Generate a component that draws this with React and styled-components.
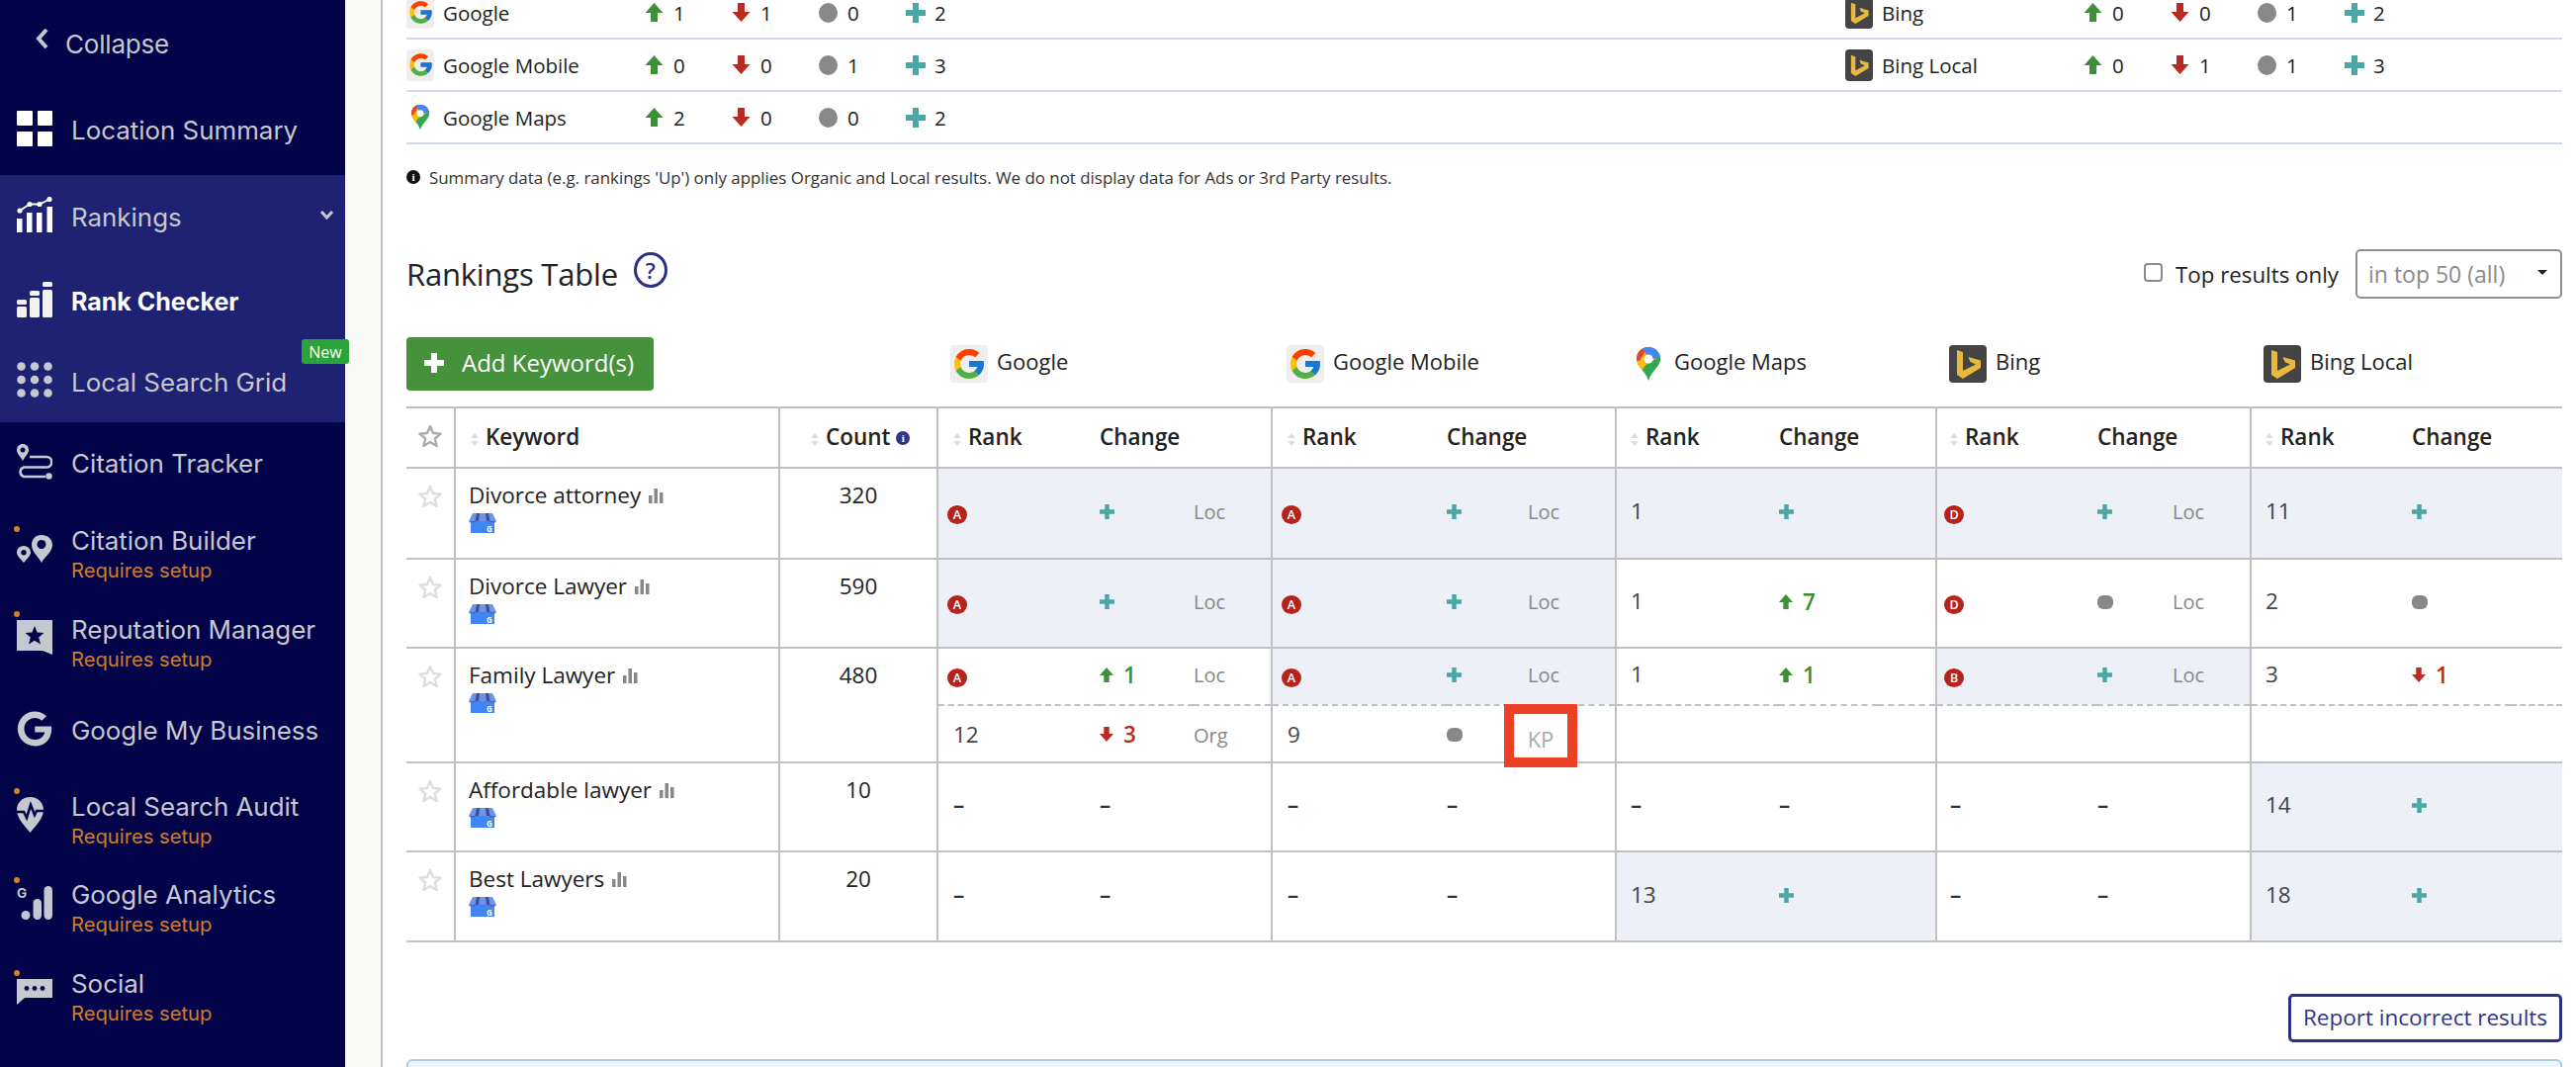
import React, { useId } from 'react';
import styled, { createGlobalStyle } from 'styled-components';
import { FcGoogle } from 'react-icons/fc';
import { FaGoogle } from 'react-icons/fa';

const Global = createGlobalStyle`
  html, body { margin: 0; padding: 0; background: #fff; overflow: hidden; }
  * { box-sizing: border-box; }
  body { font-family: "Open Sans", "Liberation Sans", sans-serif; color: #222; }
`;

const Page = styled.div`
  display: flex; width: 2605px; height: 1079px; overflow: hidden; background: #fff;
`;

/* ---------- sidebar ---------- */
const Side = styled.nav`
  width: 349px; flex: none; height: 1079px; background: #03034a; position: relative;
  font-family: Inter, "Open Sans", sans-serif; color: #c6c8d0;
`;
const CollapseRow = styled.div`
  height: 88px; display: flex; align-items: center; padding-left: 36px; gap: 16px;
  font-size: 26px; letter-spacing: -0.2px;
  svg { margin-top: -10px; }
`;
const Group = styled.div` background: #1e2272; `;
const Item = styled.div`
  height: ${p => p.$h}px; display: flex; align-items: center; padding: 0 0 ${p => p.$pb || 2}px 17px;
  position: relative; font-size: ${p => (p.$active ? 25 : 25.9)}px; letter-spacing: 0;
  color: ${p => (p.$active ? '#fff' : '#c6c8d0')};
  font-weight: ${p => (p.$active ? 700 : 400)};
`;
const IconSlot = styled.span`
  width: 36px; flex: none; margin-right: 19px; position: relative; display: flex; justify-content: flex-start;
  margin-bottom: ${p => (p.$two ? 14 : 4)}px; color: ${p => (p.$active ? '#f2f2f2' : '#c6c8d0')};
  svg { display: block; }
`;
const Dot = styled.i`
  position: absolute; left: -3px; top: -9px; width: 6px; height: 6px; border-radius: 50%; background: #d97f2b;
`;
const Labels = styled.div` display: flex; flex-direction: column; gap: 4px; line-height: 26px; `;
const Setup = styled.span` font-size: 20.2px; color: #d07c2c; `;
const NewBadge = styled.span`
  position: absolute; left: 305px; top: -6px; width: 48px; height: 25px; background: #2aa33a; color: #fff;
  font-family: "Open Sans", sans-serif; font-size: 16px; font-weight: 400; letter-spacing: 0;
  display: flex; align-items: center; justify-content: center; border-radius: 3px; z-index: 3;
`;
const ChevronWrap = styled.span`
  position: absolute; left: 323px; top: 35px; line-height: 0;
`;

const Gutter = styled.div`
  width: 38px; flex: none; background: #f9f9f7; border-right: 2px solid #c0c0c0;
`;

/* ---------- content ---------- */
const Main = styled.main`
  flex: 1; min-width: 0; padding: 0 14px 0 24px; margin-top: -13px;
`;
const SumRow = styled.div`
  display: grid; grid-template-columns: 1455px 1fr; height: 53px; border-bottom: 2px solid #cfd9ea;
`;
const SumSide = styled.div`
  display: grid; align-items: center; height: 51px;
  grid-template-columns: 241px repeat(4, 88px);
  font-size: 20px; color: #222;
`;
const SumEngine = styled.div`
  display: flex; align-items: center; gap: 9px; font-size: 20.5px;
`;
const Stat = styled.div`
  display: flex; align-items: center; font-size: 20.5px;
`;
const StatIcon = styled.span` width: 29px; flex: none; line-height: 0; `;
const Tile = styled.span`
  display: flex; align-items: center; justify-content: center; flex: none;
  width: ${p => p.$w}px; height: ${p => p.$h}px; border-radius: 4px;
  background: ${p => (p.$dark ? '#444' : p.$bare ? 'none' : '#eee')};
`;
const Note = styled.p`
  margin: 20px 0 0; height: 26px; display: flex; align-items: center; gap: 9px;
  font-size: 16.9px; color: #333;
`;
const InfoDot = styled.span`
  width: 14px; height: 14px; border-radius: 50%; flex: none; display: inline-flex;
  align-items: center; justify-content: center; background: ${p => p.$c || '#111'}; color: #fff;
  font-size: 11px; font-weight: 800; font-family: "Liberation Serif", serif;
  vertical-align: ${p => p.$lift || 0}px;
`;
const HeadRow = styled.div`
  margin-top: 60px; display: flex; align-items: center; justify-content: space-between; height: 50px;
`;
const TitleGroup = styled.div` display: flex; align-items: center; gap: 16px; `;
const Title = styled.h2`
  margin: 0; font-size: 31px; font-weight: 400; color: #222; letter-spacing: -0.2px;
`;
const Help = styled.span`
  width: 34px; height: 36px; border-radius: 50%; border: 3px solid #2b3183; color: #2b3183;
  display: flex; align-items: center; justify-content: center; font-size: 22px; font-weight: 600; margin-top: -8px;
`;
const Filters = styled.div` display: flex; align-items: center; `;
const Check = styled.input`
  appearance: none; width: 19px; height: 19px; border: 2px solid #8a8a8a; border-radius: 4px; margin: -3px 13px 0 0; background: #fff;
`;
const CheckLabel = styled.label` font-size: 22.3px; color: #222; margin-right: 17px; `;
const Select = styled.div`
  width: 209px; height: 50px; border: 2px solid #8f8f8f; border-radius: 5px; display: flex; align-items: center;
  padding: 0 13px 0 11px; justify-content: space-between; color: #8a8a8a; font-size: 23px;
  &::after { content: ''; border: 5px solid transparent; border-top-color: #222; border-bottom: 0; margin-bottom: 4px; }
`;
const EngineRow = styled.div`
  margin-top: 39px; display: grid; height: 54px; align-items: center;
  grid-template-columns: 537px 338px 348px 324px 318px 315px;
`;
const AddButton = styled.button`
  width: 250px; height: 54px; border: 0; border-radius: 4px; background: #45913c; color: #fff; display: flex;
  align-items: center; gap: 18px; padding: 0 0 3px 18px; font: 400 24px "Open Sans", sans-serif;
`;
const EngineLabel = styled.div`
  display: flex; align-items: center; gap: ${p => p.$gap || 9}px; padding-left: ${p => p.$pad}px; font-size: 22px; color: #222;
  margin-top: -1px; & > svg { flex: none; }
`;
const EngineName = styled.span` margin-top: -6px; `;
const Table = styled.table`
  margin-top: 16px; width: 2180px; table-layout: fixed; border-collapse: collapse; font-size: 22.5px;
`;
const HeadCell = styled.th`
  border-top: 2px solid #c0c0c0; border-bottom: 2px solid #c0c0c0;
  border-left: ${p => (p.$line ? '2px solid #c0c0c0' : '0')};
  padding: 0 0 3px ${p => p.$pad || 0}px; text-align: left; font-weight: 600; color: #222; white-space: nowrap;
`;
const SortMark = styled.svg` margin-right: 7px; vertical-align: -1px; `;
const BodyCell = styled.td`
  border-top: ${p => (p.$dashTop ? '2px dashed #c0c0c0' : '2px solid #c0c0c0')};
  border-bottom: ${p => (p.$dash ? '2px dashed #c0c0c0' : '2px solid #c0c0c0')};
  border-left: ${p => (p.$line ? '2px solid #c0c0c0' : '0')};
  background: ${p => (p.$shade ? '#edf0f6' : '#fff')};
  padding: 0 0 ${p => (p.$dashTop ? 0 : 5)}px ${p => p.$pad || 0}px; vertical-align: middle; color: #444; position: relative;
  white-space: nowrap;
`;
const TopCell = styled.td`
  border-top: 2px solid #c0c0c0; border-bottom: 2px solid #c0c0c0;
  border-left: ${p => (p.$line ? '2px solid #c0c0c0' : '0')};
  vertical-align: top; padding: ${p => p.$pt || 12}px 0 0 ${p => p.$pl || 0}px;
  text-align: ${p => p.$align || 'left'}; color: #222; line-height: 30px;
`;
const StarMark = styled.svg` display: block; `;
const KeywordLine = styled.div` display: flex; align-items: center; gap: 8px; height: 30px; `;
const StoreLine = styled.div` margin-top: 3px; line-height: 0; `;
const Grade = styled.span`
  display: inline-flex; width: 20px; height: 19px; border-radius: 50%; background: #b5231b; color: #fff;
  font-size: 12.5px; font-weight: 600; align-items: center; justify-content: center; margin: 4px 0 0 -6px;
`;
const RankValue = styled.span` font-weight: 500; `;
const Delta = styled.span`
  display: inline-flex; align-items: center; gap: 10px; font-weight: 600; color: ${p => p.$c};
  margin-top: -2px; vertical-align: middle;
`;
const Dash = styled.span` color: #333; font-weight: 600; `;
const Source = styled.span` font-size: 20px; color: #888; `;
const KpFrame = styled.span`
  position: absolute; left: -24px; top: -2px; width: 74px; height: 64px; border: 10px solid #ec4125; background: #fff;
  z-index: 2; display: flex; align-items: center; justify-content: center; padding-top: 6px; font-size: 22px; color: #aaa;
`;
const ReportRow = styled.div` margin-top: 52px; display: flex; justify-content: flex-end; `;
const Report = styled.button`
  width: 277px; height: 49px; border: 3px solid #2b3183; border-radius: 5px; background: #fff; color: #2f3587;
  font: 400 22.5px "Open Sans", sans-serif; padding: 0 0 2px;
`;
const Alert = styled.div`
  margin-top: 17px; height: 60px; border: 2px solid #a8cde0; border-radius: 6px; background: #eef6fb;
`;

/* ---------- drawings ---------- */
const Up = ({ w = 19, h = 19 }) => (
  <svg width={w} height={h} viewBox="0 0 18 19"><path d="M9 0 18 10H12.500V19H5.500V10H0Z" fill="#3f8f3a" /></svg>
);
const Down = ({ w = 19, h = 19 }) => (
  <svg width={w} height={h} viewBox="0 0 18 19"><path d="M5.500 0H12.500V9H18L9 19 0 9H5.500Z" fill="#b92b20" /></svg>
);
const Plus = ({ s = 20, c = '#4ba6a6' }) => (
  <svg width={s} height={s} viewBox="0 0 20 20"><path d="M7 0H13V7H20V13H13V20H7V13H0V7H7Z" fill={c} /></svg>
);
const Gray = () => (
  <svg width="19" height="20" viewBox="0 0 19 20"><ellipse cx="9.500" cy="10" rx="9.500" ry="10" fill="#888" /></svg>
);
const Sort = () => (
  <SortMark width="8" height="13" viewBox="0 0 8 13"><path d="M4 0 8 5H0ZM0 8H8L4 13Z" fill="#ddd" /></SortMark>
);
const Bars = () => (
  <svg width="15" height="15" viewBox="0 0 15 15"><path d="M0 7H3.500V15H0ZM5.500 0H9V15H5.500ZM11 4H14.500V15H11Z" fill="#888" /></svg>
);
const Star = ({ c }) => (
  <StarMark width="24" height="24" viewBox="0 0 24 24">
    <path d="M12 2 15 9 22.500 9.600 16.800 14.500 18.600 22 12 18 5.400 22 7.200 14.500 1.500 9.600 9 9Z" fill="#fff" stroke={c} strokeWidth="2.400" strokeLinejoin="round" />
  </StarMark>
);
const Store = () => (
  <svg width="28" height="20" viewBox="0 0 28 20">
    <path d="M2 8H26V20H2Z" fill="#4285f4" />
    <path d="M4 0H24L28 8H0Z" fill="#6d94e8" />
    <path d="M8 0H11L10 8H6.500ZM17 0H20L21.500 8H18Z" fill="#3b4f9e" />
    <path d="M0 8Q1.700 11 3.500 8Q5 11 7 8H21Q23 11 24.500 8Q26 11 28 8Z" fill="#3b4f9e" opacity=".75" />
    <text x="18" y="18.500" fontSize="8" fontWeight="700" fill="#fff" fontFamily="Open Sans">G</text>
  </svg>
);
const MapPin = ({ w, h }) => {
  const id = useId();
  return (
    <svg width={w} height={h} viewBox="0 0 24 34">
      <clipPath id={id}><path d="M12 0C5 0 0 5 0 12 0 20 9 24 12 34 15 24 24 20 24 12 24 5 19 0 12 0Z" /></clipPath>
      <g clipPath={`url(#${id})`}>
        <rect width="24" height="34" fill="#34a853" />
        <path d="M0 0H24V9L0 24Z" fill="#fbbc04" />
        <path d="M0 0H11L3 14 0 14Z" fill="#ea4335" />
        <path d="M6 0H24V11L12 12Z" fill="#4285f4" />
        <path d="M24 9V16L14 26 7 25Z" fill="#34a853" />
        <path d="M0 16 12 12 5 25Z" fill="#fbbc04" />
        <circle cx="12" cy="12" r="4.600" fill="#fff" />
      </g>
    </svg>
  );
};
const BingMark = ({ s }) => (
  <svg width={s} height={s} viewBox="0 0 38 38">
    <path d="M8 5 14 7V26L27 19.500 21.500 17 19.500 12 32 15.500V23L14 34 8 30Z" fill="#e8b93e" />
  </svg>
);

const Ic = {
  summary: (
    <svg width="36" height="36" viewBox="0 0 36 36" fill="#fff"><rect width="16" height="15" rx="1" /><rect x="21" width="15" height="15" rx="1" /><rect y="21" width="16" height="15" rx="1" /><rect x="21" y="21" width="15" height="15" rx="1" /></svg>
  ),
  rankings: (
    <svg width="36" height="36" viewBox="0 0 36 36" fill="#fff"><rect y="22" width="5.500" height="14" /><rect x="10" y="16" width="5.500" height="20" /><rect x="20" y="16" width="5.500" height="20" /><rect x="30.500" y="10" width="5.500" height="26" /><path d="M3 14 13 7.500 23 7.500 33 2.500" stroke="#fff" strokeWidth="1.800" fill="none" /><circle cx="3" cy="14" r="2.600" /><circle cx="13" cy="7.500" r="2.600" /><circle cx="23" cy="7.500" r="2.600" /><circle cx="33" cy="2.500" r="2.600" /></svg>
  ),
  checker: (
    <svg width="36" height="36" viewBox="0 0 36 36" fill="#f2f2f2"><rect y="18" width="10" height="5" rx="1.500" /><rect y="25" width="10" height="11" rx="1.500" /><rect x="13" y="9" width="10" height="5" rx="1.500" /><rect x="13" y="16" width="10" height="20" rx="1.500" /><rect x="26" width="10" height="5" rx="1.500" /><rect x="26" y="8" width="10" height="28" rx="1.500" /></svg>
  ),
  grid: (
    <svg width="36" height="36" viewBox="0 0 36 36" fill="#c6c8d0">{[4.5, 18, 31.5].flatMap(y => [4.5, 18, 31.5].map(x => <circle key={`${x}-${y}`} cx={x} cy={y} r="4.300" />))}</svg>
  ),
  tracker: (
    <svg width="36" height="36" viewBox="0 0 36 36" fill="#c6c8d0"><path fillRule="evenodd" d="M6 0C2.500 0 0 2.600 0 6 0 10 4 13 6 17 8 13 12 10 12 6 12 2.600 9.500 0 6 0ZM6 3.500A2.500 2.500 0 1 1 6 8.500 2.500 2.500 0 1 1 6 3.500Z" /><path d="M13 13H30A5 5 0 0 1 30 23.500H7A5 5 0 0 0 7 33H29" fill="none" stroke="#c6c8d0" strokeWidth="2.600" /><circle cx="32.500" cy="32.500" r="3.200" /></svg>
  ),
  builder: (
    <svg width="36" height="28" viewBox="0 0 36 28" fill="#c6c8d0"><path fillRule="evenodd" d="M25 0C19 0 15 4 15 10 15 17 22 22 25 28 28 22 36 17 36 10 36 4 31 0 25 0ZM25 5A4.500 4.500 0 1 1 25 14 4.500 4.500 0 1 1 25 5Z" /><path fillRule="evenodd" d="M7 11C3 11 0 14 0 17.500 0 21.500 4.500 24.500 7 28 9.500 24.500 14 21.500 14 17.500 14 14 11 11 7 11ZM7 15A2.700 2.700 0 1 1 7 20.400 2.700 2.700 0 1 1 7 15Z" /></svg>
  ),
  reputation: (
    <svg width="36" height="36" viewBox="0 0 36 36"><path d="M0 0H36V35L26 31H0Z" fill="#c6c8d0" /><path d="M18 6 20.600 12.500 27.500 13 22.200 17.500 24 24.500 18 20.700 12 24.500 13.800 17.500 8.500 13 15.400 12.500Z" fill="#03034a" /></svg>
  ),
  audit: (
    <svg width="27" height="36" viewBox="0 0 27 36"><path d="M13.500 0C5.500 0 0 6 0 13 0 22 9 30 13.500 36 18 30 27 22 27 13 27 6 21.500 0 13.500 0Z" fill="#c6c8d0" /><path d="M-1 15H7L10 21 14 8 18 18 20 14H28" fill="none" stroke="#03034a" strokeWidth="2.600" /></svg>
  ),
  analytics: (
    <svg width="36" height="34" viewBox="0 0 36 34" fill="#c6c8d0"><text x="0" y="12" fontSize="13.500" fontWeight="700" fontFamily="Inter">G</text><circle cx="9" cy="29.500" r="4.500" /><rect x="16.500" y="13" width="8.500" height="21" rx="4.200" /><rect x="27.500" width="8.500" height="34" rx="4.200" /></svg>
  ),
  social: (
    <svg width="36" height="26" viewBox="0 0 36 26"><path d="M0 0H36V19H8L0 26Z" fill="#c6c8d0" /><circle cx="10" cy="9.500" r="2.400" fill="#03034a" /><circle cx="18" cy="9.500" r="2.400" fill="#03034a" /><circle cx="26" cy="9.500" r="2.400" fill="#03034a" /></svg>
  ),
};

/* ---------- data ---------- */
const A = g => ({ g });
const NEW = { d: 'new' };
const SAME = { d: 'same' };
const up = n => ({ d: 'up', n });
const down = n => ({ d: 'down', n });
const DASH = { d: 'dash' };
const c = (rank, change, src, shade) => ({ rank, change, src, shade });
const pads = [15, 15, 14, 13, 14];

const rows = [
  { kw: 'Divorce attorney', count: '320', h: [92], sub: [[
    c(A('A'), NEW, 'Loc', 1), c(A('A'), NEW, 'Loc', 1), c('1', NEW, '', 1), c(A('D'), NEW, 'Loc', 1), c('11', NEW, '', 1),
  ]] },
  { kw: 'Divorce Lawyer', count: '590', h: [90], sub: [[
    c(A('A'), NEW, 'Loc', 1), c(A('A'), NEW, 'Loc', 1), c('1', up(7), '', 0), c(A('D'), SAME, 'Loc', 0), c('2', SAME, '', 0),
  ]] },
  { kw: 'Family Lawyer', count: '480', h: [58, 58], sub: [
    [c(A('A'), up(1), 'Loc', 0), c(A('A'), NEW, 'Loc', 1), c('1', up(1), '', 0), c(A('B'), NEW, 'Loc', 1), c('3', down(1), '', 0)],
    [c('12', down(3), 'Org', 0), c('9', SAME, 'KP', 0), c('', null, '', 0), c('', null, '', 0), c('', null, '', 0)],
  ] },
  { kw: 'Affordable lawyer', count: '10', h: [90], sub: [[
    c('–', DASH, '', 0), c('–', DASH, '', 0), c('–', DASH, '', 0), c('–', DASH, '', 0), c('14', NEW, '', 1),
  ]] },
  { kw: 'Best Lawyers', count: '20', h: [91], sub: [[
    c('–', DASH, '', 0), c('–', DASH, '', 0), c('13', NEW, '', 1), c('–', DASH, '', 0), c('18', NEW, '', 1),
  ]] },
];

const widths = [49, 328, 160, 164, 95, 79, 177, 82, 89, 165, 100, 59, 163, 76, 79, 163, 100, 52];

const GoogleTile = ({ w, h, s }) => <Tile $w={w} $h={h}><FcGoogle size={s} /></Tile>;
const BingTile = ({ w, h, s }) => <Tile $w={w} $h={h} $dark><BingMark s={s} /></Tile>;

const ChangeMark = ({ v }) => {
  if (!v) return null;
  if (v.d === 'new') return <Delta $c="#4ba6a6"><Plus s={15} /></Delta>;
  if (v.d === 'same') return <Delta $c="#888"><svg width="16" height="14" viewBox="0 0 16 14"><rect width="16" height="14" rx="6" fill="#888" /></svg></Delta>;
  if (v.d === 'up') return <Delta $c="#3c8c32"><Up w={14} h={15} />{v.n}</Delta>;
  if (v.d === 'down') return <Delta $c="#b92b20"><Down w={14} h={15} />{v.n}</Delta>;
  return <Dash>–</Dash>;
};

const RankMark = ({ v }) => {
  if (v && v.g) return <Grade>{v.g}</Grade>;
  if (v === '–') return <Dash>–</Dash>;
  return <RankValue>{v}</RankValue>;
};

const SumStats = ({ v }) => (
  <>
    <Stat><StatIcon><Up /></StatIcon>{v[0]}</Stat>
    <Stat><StatIcon><Down /></StatIcon>{v[1]}</Stat>
    <Stat><StatIcon><Gray /></StatIcon>{v[2]}</Stat>
    <Stat><StatIcon><Plus /></StatIcon>{v[3]}</Stat>
  </>
);
const Summary = ({ icon, name, v }) => (
  <SumSide>
    <SumEngine>{icon}{name}</SumEngine>
    <SumStats v={v} />
  </SumSide>
);

const NavItem = ({ icon, label, h, two, dot }) => (
  <Item $h={h} $pb={two ? 3 : 2}>
    <IconSlot $two={two}>{dot && <Dot />}{icon}</IconSlot>
    <Labels>
      <span>{label}</span>
      {two && <Setup>Requires setup</Setup>}
    </Labels>
  </Item>
);

export default function App() {
  const bingTop = <BingTile w={28} h={32} s={30} />;
  const googleTop = <GoogleTile w={28} h={32} s={27} />;
  return (
    <Page>
      <Global />
      <Side>
        <CollapseRow>
          <svg width="14" height="22" viewBox="0 0 14 22"><path d="M11 2 3 11 11 20" fill="none" stroke="#c6c8d0" strokeWidth="4" /></svg>
          <span>Collapse</span>
        </CollapseRow>
        <NavItem icon={Ic.summary} label="Location Summary" h={89} />
        <Group>
          <Item $h={86}>
            <IconSlot>{Ic.rankings}</IconSlot>
            <span>Rankings</span>
            <ChevronWrap><svg width="15" height="11" viewBox="0 0 15 11"><path d="M2 2 7.500 8 13 2" fill="none" stroke="#c6c8d0" strokeWidth="3" /></svg></ChevronWrap>
          </Item>
          <Item $h={86} $active>
            <IconSlot $active>{Ic.checker}</IconSlot>
            <span>Rank Checker</span>
          </Item>
          <Item $h={78} $pb={4}>
            <NewBadge>New</NewBadge>
            <IconSlot>{Ic.grid}</IconSlot>
            <span>Local Search Grid</span>
          </Item>
        </Group>
        <NavItem icon={Ic.tracker} label="Citation Tracker" h={86} />
        <NavItem icon={Ic.builder} label="Citation Builder" h={101} two dot />
        <NavItem icon={Ic.reputation} label="Reputation Manager" h={79} two dot />
        <NavItem icon={<FaGoogle size={36} />} label="Google My Business" h={94} />
        <NavItem icon={Ic.audit} label="Local Search Audit" h={90} two dot />
        <NavItem icon={Ic.analytics} label="Google Analytics" h={89} two dot />
        <NavItem icon={Ic.social} label="Social" h={90} two dot />
      </Side>
      <Gutter />
      <Main>
        <SumRow>
          <Summary icon={googleTop} name="Google" v={[1, 1, 0, 2]} />
          <Summary icon={bingTop} name="Bing" v={[0, 0, 1, 2]} />
        </SumRow>
        <SumRow>
          <Summary icon={googleTop} name="Google Mobile" v={[0, 0, 1, 3]} />
          <Summary icon={bingTop} name="Bing Local" v={[0, 1, 1, 3]} />
        </SumRow>
        <SumRow>
          <Summary icon={<Tile $w={28} $h={32} $bare><MapPin w={18} h={27} /></Tile>} name="Google Maps" v={[2, 0, 0, 2]} />
          <div />
        </SumRow>
        <Note>
          <InfoDot>i</InfoDot>
          Summary data (e.g. rankings 'Up') only applies Organic and Local results. We do not display data for Ads or 3rd Party results.
        </Note>
        <HeadRow>
          <TitleGroup>
            <Title>Rankings Table</Title>
            <Help>?</Help>
          </TitleGroup>
          <Filters>
            <Check type="checkbox" readOnly />
            <CheckLabel>Top results only</CheckLabel>
            <Select>in top 50 (all)</Select>
          </Filters>
        </HeadRow>
        <EngineRow>
          <AddButton><Plus s={20} c="#fff" />Add Keyword(s)</AddButton>
          <EngineLabel $pad={13}><GoogleTile w={38} h={38} s={36} /><EngineName>Google</EngineName></EngineLabel>
          <EngineLabel $pad={15}><GoogleTile w={38} h={38} s={36} /><EngineName>Google Mobile</EngineName></EngineLabel>
          <EngineLabel $pad={21} $gap={14}><MapPin w={24} h={34} /><EngineName>Google Maps</EngineName></EngineLabel>
          <EngineLabel $pad={13}><BingTile w={38} h={38} s={38} /><EngineName>Bing</EngineName></EngineLabel>
          <EngineLabel $pad={13}><BingTile w={38} h={38} s={38} /><EngineName>Bing Local</EngineName></EngineLabel>
        </EngineRow>
        <Table>
          <colgroup>{widths.map((w, i) => <col key={i} style={{ width: w }} />)}</colgroup>
          <thead>
            <tr style={{ height: 61 }}>
              <HeadCell $pad={12}><Star c="#aaa" /></HeadCell>
              <HeadCell $line $pad={15}><Sort />Keyword</HeadCell>
              <HeadCell $line $pad={31}><Sort />Count <InfoDot $c="#2f3587" $lift={3}>i</InfoDot></HeadCell>
              {pads.map((p, i) => (
                <React.Fragment key={i}>
                  <HeadCell $line $pad={p}><Sort />Rank</HeadCell>
                  <HeadCell colSpan={2}>Change</HeadCell>
                </React.Fragment>
              ))}
            </tr>
          </thead>
          <tbody>
            {rows.map(r => r.sub.map((cells, si) => {
              const dashed = r.sub.length > 1 && si === 0;
              const dashTop = r.sub.length > 1 && si === 1;
              return (
                <tr key={r.kw + si} style={{ height: r.h[si] }}>
                  {si === 0 && (
                    <>
                      <TopCell rowSpan={r.sub.length} $pl={12} $pt={16}><Star c="#ddd" /></TopCell>
                      <TopCell rowSpan={r.sub.length} $line $pl={13}>
                        <KeywordLine>{r.kw}<Bars /></KeywordLine>
                        <StoreLine><Store /></StoreLine>
                      </TopCell>
                      <TopCell rowSpan={r.sub.length} $line $align="center">{r.count}</TopCell>
                    </>
                  )}
                  {cells.map((x, i) => (
                    <React.Fragment key={i}>
                      <BodyCell $line $shade={x.shade} $dash={dashed} $dashTop={dashTop} $pad={pads[i]}>
                        <RankMark v={x.rank} />
                      </BodyCell>
                      <BodyCell $shade={x.shade} $dash={dashed} $dashTop={dashTop}><ChangeMark v={x.change} /></BodyCell>
                      <BodyCell $shade={x.shade} $dash={dashed} $dashTop={dashTop}>
                        {x.src === 'KP' ? <KpFrame>KP</KpFrame> : <Source>{x.src}</Source>}
                      </BodyCell>
                    </React.Fragment>
                  ))}
                </tr>
              );
            }))}
          </tbody>
        </Table>
        <ReportRow><Report>Report incorrect results</Report></ReportRow>
        <Alert />
      </Main>
    </Page>
  );
}
